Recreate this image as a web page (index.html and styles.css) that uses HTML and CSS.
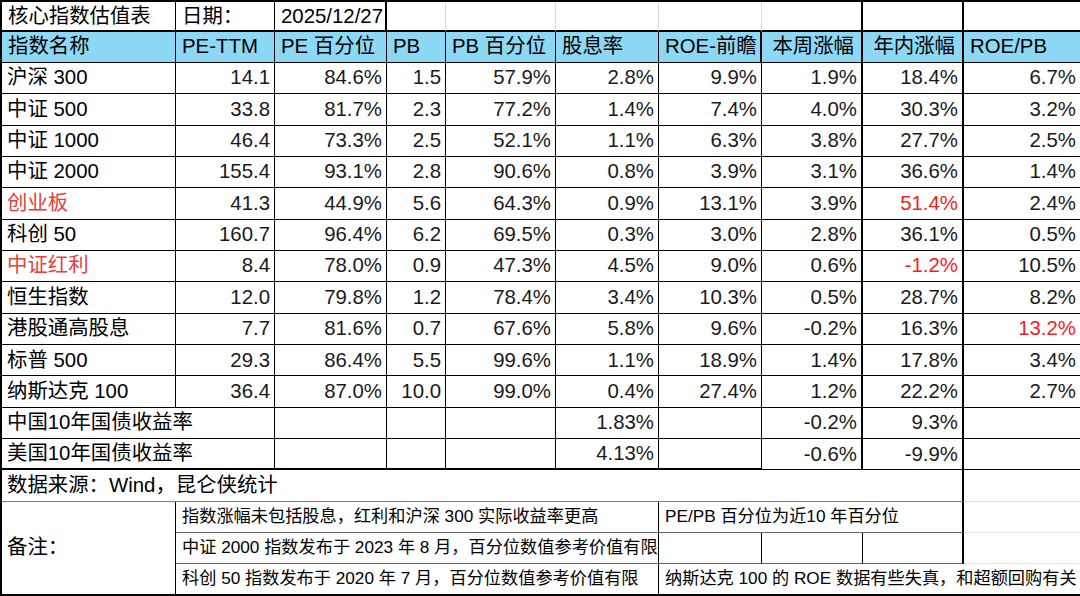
FILE: index.html
```html
<!DOCTYPE html>
<html lang="zh-CN">
<head>
<meta charset="utf-8">
<title>核心指数估值表</title>
<link rel="stylesheet" href="styles.css">
</head>
<body>
<div class="sheet">
  <!-- title row -->
  <div class="c t">核心指数估值表</div>
  <div class="c t">日期：</div>
  <div class="c t k2">2025/12/27</div>
  <div class="c t lgr"></div>
  <div class="c t lgr"></div>
  <div class="c t lgr"></div>
  <div class="c t lgr"></div>
  <div class="c t k2"></div>
  <div class="c t k2"></div>
  <div class="c t nr"></div>

  <!-- header row -->
  <div class="c h">指数名称</div>
  <div class="c h">PE-TTM</div>
  <div class="c h">PE 百分位</div>
  <div class="c h">PB</div>
  <div class="c h">PB 百分位</div>
  <div class="c h">股息率</div>
  <div class="c h k2">ROE-前瞻</div>
  <div class="c h k2 r">本周涨幅</div>
  <div class="c h k2 r">年内涨幅</div>
  <div class="c h nr">ROE/PB</div>

  <div class="c name">沪深 300</div><div class="c n">14.1</div><div class="c n">84.6%</div><div class="c n">1.5</div><div class="c n">57.9%</div><div class="c n">2.8%</div><div class="c n">9.9%</div><div class="c n k2">1.9%</div><div class="c n k2">18.4%</div><div class="c n nr">6.7%</div>
  <div class="c name">中证 500</div><div class="c n">33.8</div><div class="c n">81.7%</div><div class="c n">2.3</div><div class="c n">77.2%</div><div class="c n">1.4%</div><div class="c n">7.4%</div><div class="c n k2">4.0%</div><div class="c n k2">30.3%</div><div class="c n nr">3.2%</div>
  <div class="c name">中证 1000</div><div class="c n">46.4</div><div class="c n">73.3%</div><div class="c n">2.5</div><div class="c n">52.1%</div><div class="c n">1.1%</div><div class="c n">6.3%</div><div class="c n k2">3.8%</div><div class="c n k2">27.7%</div><div class="c n nr">2.5%</div>
  <div class="c name">中证 2000</div><div class="c n">155.4</div><div class="c n">93.1%</div><div class="c n">2.8</div><div class="c n">90.6%</div><div class="c n">0.8%</div><div class="c n">3.9%</div><div class="c n k2">3.1%</div><div class="c n k2">36.6%</div><div class="c n nr">1.4%</div>
  <div class="c name redname">创业板</div><div class="c n">41.3</div><div class="c n">44.9%</div><div class="c n">5.6</div><div class="c n">64.3%</div><div class="c n">0.9%</div><div class="c n">13.1%</div><div class="c n k2">3.9%</div><div class="c n k2 rednum">51.4%</div><div class="c n nr">2.4%</div>
  <div class="c name">科创 50</div><div class="c n">160.7</div><div class="c n">96.4%</div><div class="c n">6.2</div><div class="c n">69.5%</div><div class="c n">0.3%</div><div class="c n">3.0%</div><div class="c n k2">2.8%</div><div class="c n k2">36.1%</div><div class="c n nr">0.5%</div>
  <div class="c name redname">中证红利</div><div class="c n">8.4</div><div class="c n">78.0%</div><div class="c n">0.9</div><div class="c n">47.3%</div><div class="c n">4.5%</div><div class="c n">9.0%</div><div class="c n k2">0.6%</div><div class="c n k2 rednum">-1.2%</div><div class="c n nr">10.5%</div>
  <div class="c name">恒生指数</div><div class="c n">12.0</div><div class="c n">79.8%</div><div class="c n">1.2</div><div class="c n">78.4%</div><div class="c n">3.4%</div><div class="c n">10.3%</div><div class="c n k2">0.5%</div><div class="c n k2">28.7%</div><div class="c n nr">8.2%</div>
  <div class="c name">港股通高股息</div><div class="c n">7.7</div><div class="c n">81.6%</div><div class="c n">0.7</div><div class="c n">67.6%</div><div class="c n">5.8%</div><div class="c n">9.6%</div><div class="c n k2">-0.2%</div><div class="c n k2">16.3%</div><div class="c n nr rednum">13.2%</div>
  <div class="c name">标普 500</div><div class="c n">29.3</div><div class="c n">86.4%</div><div class="c n">5.5</div><div class="c n">99.6%</div><div class="c n">1.1%</div><div class="c n">18.9%</div><div class="c n k2">1.4%</div><div class="c n k2">17.8%</div><div class="c n nr">3.4%</div>
  <div class="c name">纳斯达克 100</div><div class="c n">36.4</div><div class="c n">87.0%</div><div class="c n">10.0</div><div class="c n">99.0%</div><div class="c n">0.4%</div><div class="c n">27.4%</div><div class="c n k2">1.2%</div><div class="c n k2">22.2%</div><div class="c n nr">2.7%</div>

  <!-- bond rows -->
  <div class="c name s2">中国10年国债收益率</div><div class="c n"></div><div class="c n"></div><div class="c n"></div><div class="c n">1.83%</div><div class="c n"></div><div class="c n k2">-0.2%</div><div class="c n k2">9.3%</div><div class="c n nr"></div>
  <div class="c name s2 tb">美国10年国债收益率</div><div class="c n tb"></div><div class="c n tb"></div><div class="c n tb"></div><div class="c n tb">4.13%</div><div class="c n tb"></div><div class="c n k2">-0.6%</div><div class="c n k2">-9.9%</div><div class="c n nr"></div>

  <!-- source row -->
  <div class="c name s9 src">数据来源：Wind，昆仑侠统计</div>
  <div class="c nr lgb"></div>

  <!-- notes -->
  <div class="c name rs3 remark">备注：</div>
  <div class="c note s5">指数涨幅未包括股息，红利和沪深 300 实际收益率更高</div>
  <div class="c note s3 k2">PE/PB 百分位为近10 年百分位</div>
  <div class="c nr lgb"></div>

  <div class="c note s5">中证 2000 指数发布于 2023 年 8 月，百分位数值参考价值有限</div>
  <div class="c note"></div>
  <div class="c note"></div>
  <div class="c note k2"></div>
  <div class="c nr lgb"></div>

  <div class="c note s5 lastb">科创 50 指数发布于 2020 年 7 月，百分位数值参考价值有限</div>
  <div class="c note s4 nr lastb">纳斯达克 100 的 ROE 数据有些失真，和超额回购有关</div>
</div>
</body>
</html>
```

FILE: styles.css
```css
html, body {
  margin: 0;
  padding: 0;
  background: #ffffff;
}

body {
  font-family: "Liberation Sans", "Noto Sans CJK SC", sans-serif;
  color: #111111;
  overflow: hidden;
}

.sheet {
  box-sizing: border-box;
  width: 1080px;
  height: 596px;
  display: grid;
  grid-template-columns: 174px 99px 112px 59px 110px 103px 103px 101px 101px 116px;
  grid-template-rows: 29.6px repeat(18, 31.35px);
  border-top: 2px solid #000000;
  border-left: 2px solid #000000;
  font-size: 20.4px;
  line-height: 1;
}

.c {
  box-sizing: border-box;
  display: flex;
  align-items: center;
  min-width: 0;
  white-space: nowrap;
  overflow: visible;
  padding: 0 4px 1px 6px;
  border-right: 1px solid #000000;
  border-bottom: 1px solid #000000;
  color: #000000;
}

/* spans */
.s2 { grid-column: span 2; }
.s3 { grid-column: span 3; }
.s4 { grid-column: span 4; }
.s5 { grid-column: span 5; }
.s9 { grid-column: span 9; }
.rs3 { grid-row: span 3; }

/* border variants */
.k2 { border-right: 2px solid #000000; }
.nr { border-right: none; }
.lgr { border-right: 1px solid #dcdcdc; }
.tb { border-bottom: 2px solid #000000; }
.lgb { border-bottom: 1px solid #e2e2e2; }

/* title row */
.t {
  border-bottom: 2px solid #000000;
  padding-bottom: 0;
}

/* header row */
.h {
  background: #8dd8f5;
}
.h.r {
  justify-content: flex-end;
  padding-right: 7px;
}

/* first column */
.name {
  padding-left: 5px;
}
.redname {
  color: #e8403a;
}

/* numeric cells */
.n {
  justify-content: flex-end;
  color: #1a1a1a;
}
.rednum {
  color: #f5211a;
}

/* source row */
.src {
  border-right: 2px solid #000000;
  border-bottom: 1px solid #808080;
}

/* notes */
.remark {
  border-bottom: 2px solid #000000;
}
.note {
  font-size: 17.2px;
  border-bottom: 1px solid #666666;
  padding-left: 6px;
}
.lastb {
  border-bottom: 2px solid #000000;
}
```
